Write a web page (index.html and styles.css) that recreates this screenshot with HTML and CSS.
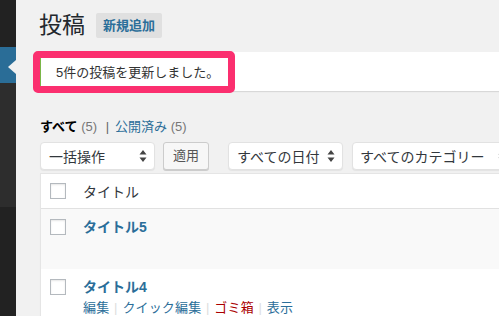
FILE: index.html
```html
<!DOCTYPE html>
<html lang="ja">
<head>
    <meta charset="UTF-8">
    <meta name="viewport" content="width=device-width, initial-scale=1.0">
    <title>投稿 ‹ WordPress</title>
    <link rel="stylesheet" href="styles.css">
</head>
<body>

    <div class="layout">
        <div class="sidebar">
            <div class="menu-top"></div>
            <div class="menu-current"><span class="menu-arrow"></span></div>
            <div class="submenu"></div>
        </div>

        <div class="main">
            <div class="page-header">
                <h1>投稿</h1>
                <a class="page-title-action" href="#">新規追加</a>
            </div>

            <div class="notice">
                <p>5件の投稿を更新しました。</p>
            </div>

            <ul class="subsubsub">
                <li><a class="current" href="#">すべて</a> <span class="count">(5)</span> <span class="sep">|</span></li>
                <li><a href="#">公開済み</a> <span class="count">(5)</span></li>
            </ul>

            <div class="tablenav">
                <div class="select select-bulk">
                    <span>一括操作</span>
                    <svg class="arrows" width="8" height="12" viewBox="0 0 8 12"><path d="M4 0 L7.5 4.5 H0.5 Z M4 12 L0.5 7.5 H7.5 Z" fill="#444"/></svg>
                </div>
                <a class="button" href="#">適用</a>
                <div class="select select-date">
                    <span>すべての日付</span>
                    <svg class="arrows" width="8" height="12" viewBox="0 0 8 12"><path d="M4 0 L7.5 4.5 H0.5 Z M4 12 L0.5 7.5 H7.5 Z" fill="#444"/></svg>
                </div>
                <div class="select select-cat">
                    <span>すべてのカテゴリー</span>
                    <svg class="arrows" width="8" height="12" viewBox="0 0 8 12"><path d="M4 0 L7.5 4.5 H0.5 Z M4 12 L0.5 7.5 H7.5 Z" fill="#444"/></svg>
                </div>
            </div>

            <div class="list-table">
                <div class="row row-head">
                    <div class="cb"><span class="checkbox"></span></div>
                    <div class="col-title">タイトル</div>
                </div>
                <div class="row alternate">
                    <div class="cb"><span class="checkbox"></span></div>
                    <div class="col-title">
                        <a class="row-title" href="#">タイトル5</a>
                        <div class="row-actions hidden">
                            <a href="#">編集</a> <span class="sep">|</span> <a href="#">クイック編集</a> <span class="sep">|</span> <a class="trash" href="#">ゴミ箱</a> <span class="sep">|</span> <a href="#">表示</a>
                        </div>
                    </div>
                </div>
                <div class="row">
                    <div class="cb"><span class="checkbox"></span></div>
                    <div class="col-title">
                        <a class="row-title" href="#">タイトル4</a>
                        <div class="row-actions">
                            <a href="#">編集</a> <span class="sep">|</span> <a href="#">クイック編集</a> <span class="sep">|</span> <a class="trash" href="#">ゴミ箱</a> <span class="sep">|</span> <a href="#">表示</a>
                        </div>
                    </div>
                </div>
            </div>
        </div>

        <div class="highlight"></div>
    </div>

</body>
</html>
```

FILE: styles.css
```css
body {
    font-family: 'Liberation Sans', 'Noto Sans CJK JP', sans-serif;
    margin: 0;
    padding: 0;
    background-color: #f1f1f1;
    color: #444;
    font-size: 13px;
    overflow: hidden;
}
a {
    color: #2b6e99;
    text-decoration: none;
}
.layout {
    position: relative;
    display: flex;
    height: 316px;
}
.sidebar {
    width: 16px;
    flex-shrink: 0;
    display: flex;
    flex-direction: column;
    background: #222;
}
.menu-top {
    height: 47px;
}
.menu-current {
    position: relative;
    height: 36px;
    background: #2a6d97;
}
.menu-arrow {
    position: absolute;
    right: 0;
    top: 13px;
    width: 0;
    height: 0;
    border-top: 7px solid transparent;
    border-bottom: 7px solid transparent;
    border-right: 8px solid #f1f1f1;
}
.submenu {
    height: 124px;
    background: #2d2d2d;
}
.main {
    flex: 1;
    min-width: 0;
    padding: 10px 0 0 24px;
    overflow: hidden;
}
.page-header {
    display: flex;
    align-items: center;
    height: 31px;
}
h1 {
    margin: 0 0 0 -1px;
    font-size: 23px;
    font-weight: 400;
    line-height: 29px;
    color: #23282d;
}
.page-title-action {
    margin-left: 11px;
    padding: 4px 7px;
    background: #e0e0e0;
    border-radius: 2px;
    font-weight: 600;
    font-size: 13px;
    line-height: 17px;
}
.notice {
    margin: 11px 0 0 -3px;
    height: 39px;
    background: #fff;
    border-left: 4px solid #7ab648;
    box-shadow: 0 1px 1px rgba(0, 0, 0, 0.1);
}
.notice p {
    margin: 0;
    padding: 2px 0 0 15px;
    line-height: 37px;
    color: #333;
}
.subsubsub {
    list-style: none;
    margin: 26px 0 0;
    padding: 0;
    display: flex;
    line-height: 20px;
    color: #666;
}
.subsubsub li {
    white-space: nowrap;
}
.subsubsub .current {
    color: #000;
    font-weight: 600;
}
.subsubsub .count {
    color: #777;
}
.subsubsub .sep {
    margin: 0 6px 0 5px;
    color: #666;
}
.tablenav {
    display: flex;
    align-items: center;
    margin-top: 5px;
    height: 28px;
    white-space: nowrap;
}
.select {
    display: flex;
    align-items: center;
    justify-content: space-between;
    box-sizing: border-box;
    height: 28px;
    padding: 0 7px 0 8px;
    background: #fff;
    border: 1px solid #e2e2e2;
    border-radius: 4px;
    box-shadow: 0 1px 1px rgba(0, 0, 0, 0.06);
    font-size: 14px;
    color: #32373c;
    flex-shrink: 0;
}
.select-bulk {
    width: 115px;
}
.select-date {
    width: 115px;
    margin-left: 19px;
}
.select-cat {
    width: 162px;
    margin-left: 9px;
    padding-left: 7px;
}
.button {
    box-sizing: border-box;
    margin-left: 8px;
    height: 28px;
    padding: 0 9px;
    line-height: 26px;
    background: #f7f7f7;
    border: 1px solid #ccc;
    border-radius: 3px;
    box-shadow: 0 1px 0 #ccc;
    color: #555;
    font-size: 13px;
}
.list-table {
    margin-top: 3px;
    background: #fff;
    border: 1px solid #e5e5e5;
    border-right: none;
    box-shadow: 0 1px 1px rgba(0, 0, 0, 0.04);
}
.row {
    display: flex;
    align-items: flex-start;
    height: 60px;
}
.row-head {
    height: 34px;
    align-items: center;
    border-bottom: 1px solid #e1e1e1;
}
.alternate {
    background: #f9f9f9;
}
.cb {
    width: 33px;
    padding-left: 9px;
    flex-shrink: 0;
}
.row .cb {
    margin-top: 10px;
}
.row-head .cb {
    margin-top: 0;
}
.checkbox {
    display: block;
    box-sizing: border-box;
    width: 16px;
    height: 16px;
    background: #fff;
    border: 1px solid #b4b9be;
    box-shadow: inset 0 1px 2px rgba(0, 0, 0, 0.1);
}
.col-title {
    font-size: 14px;
    color: #32373c;
}
.row .col-title {
    padding-top: 9px;
}
.row-head .col-title {
    padding-top: 0;
}
.row-title {
    display: block;
    font-weight: 600;
    line-height: 19px;
}
.row-actions {
    font-size: 13px;
    line-height: 22px;
    white-space: nowrap;
    letter-spacing: 0.15px;
}
.row-actions.hidden {
    visibility: hidden;
}
.row-actions .sep {
    color: #ddd;
    margin: 0 1px;
}
.row-actions .trash {
    color: #a00;
}
.highlight {
    position: absolute;
    left: 33px;
    top: 51px;
    width: 202px;
    height: 42px;
    box-sizing: border-box;
    border: 7px solid #fb2f6f;
    border-radius: 5px;
}
```
